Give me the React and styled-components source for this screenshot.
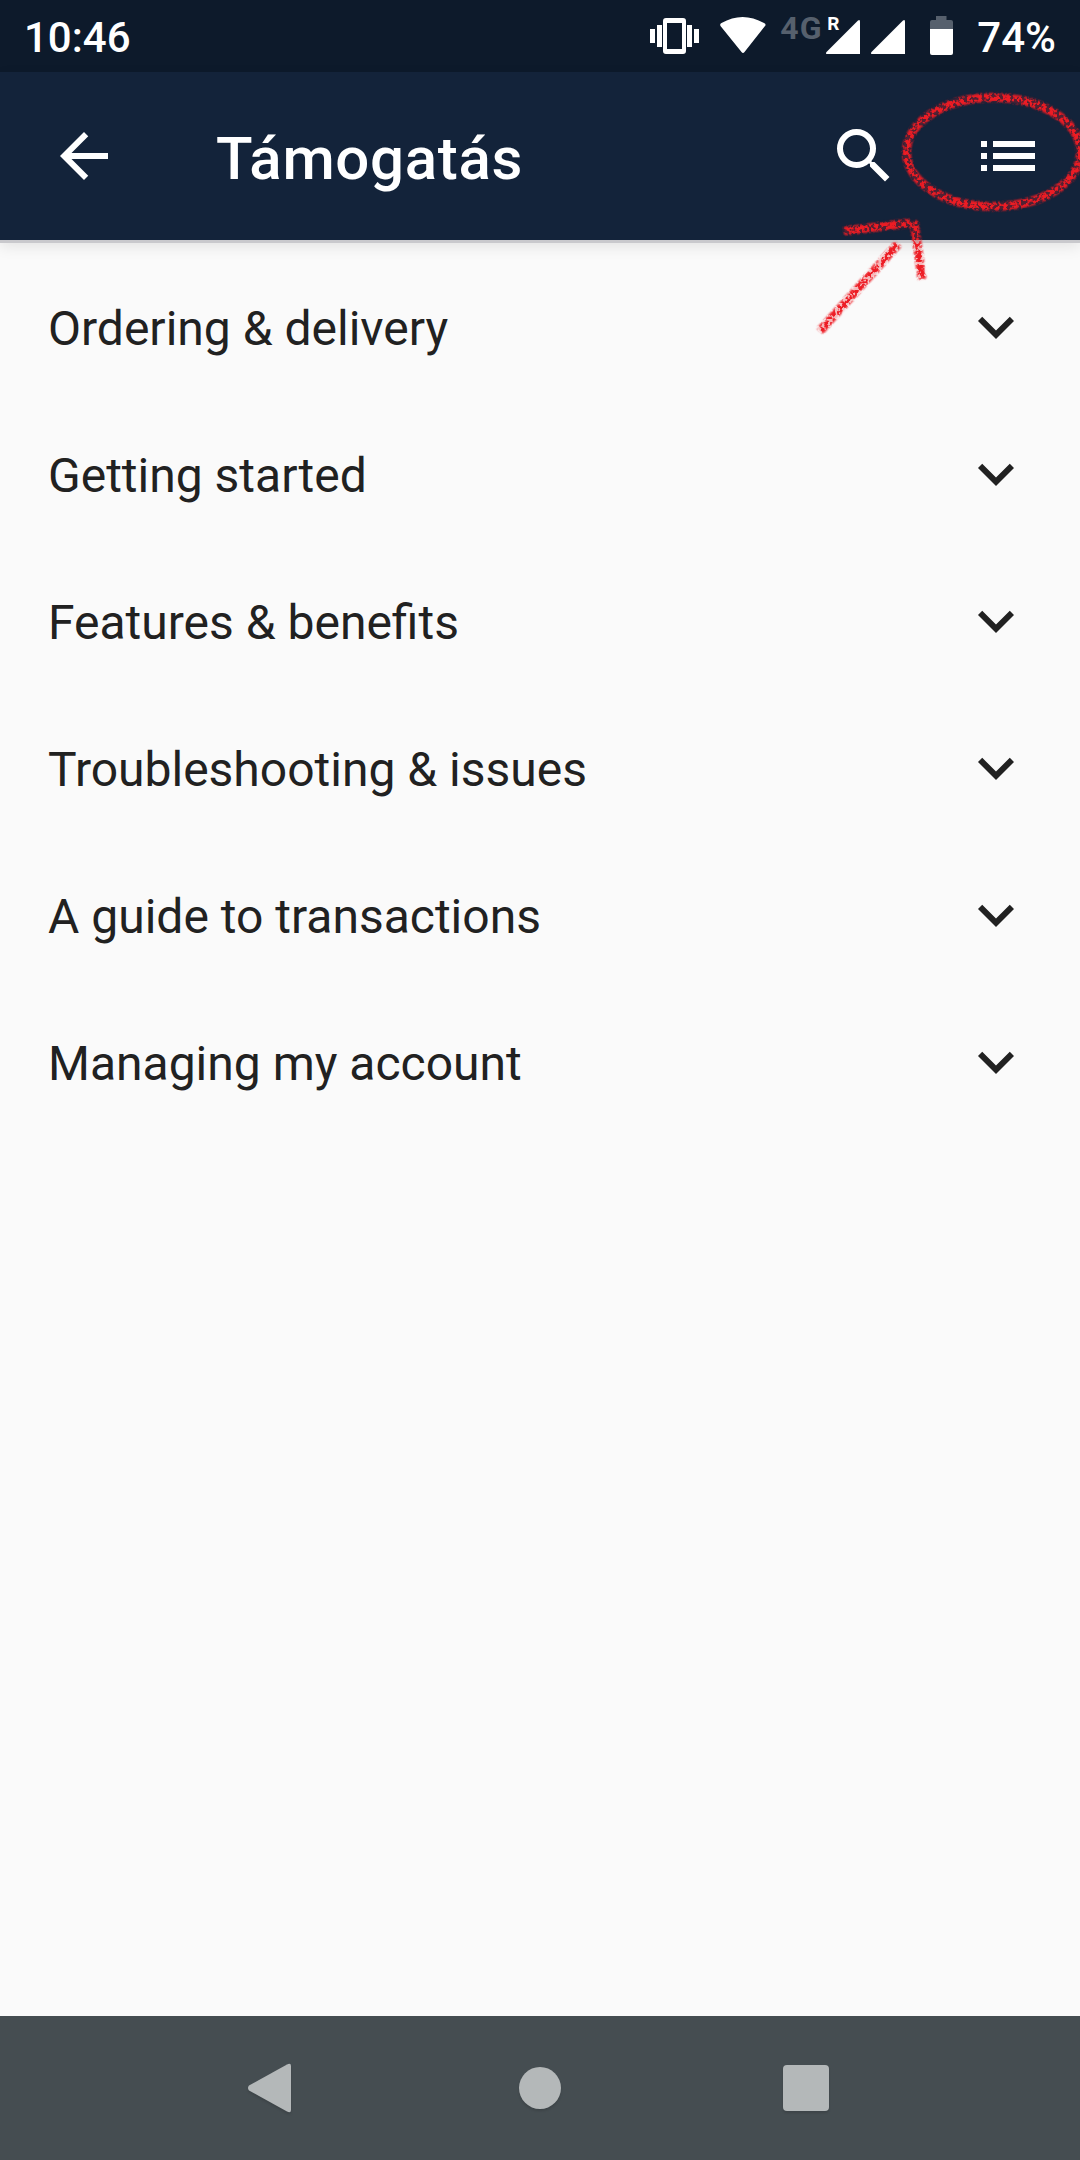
import styled, { createGlobalStyle } from "styled-components"
import { MdArrowBack, MdSearch, MdList, MdExpandMore } from "react-icons/md"

const GlobalStyle = createGlobalStyle`
  * { box-sizing: border-box; }
  body { margin: 0; background: #fafafa; overflow: hidden; }
`;

const Screen = styled.div`
  position: relative;
  display: flex;
  flex-direction: column;
  width: 1080px;
  height: 2160px;
  overflow: hidden;
  background: #fafafa;
  font-family: Roboto, "Noto Sans", sans-serif;
`;

const StatusBar = styled.div`
  display: flex;
  align-items: center;
  justify-content: space-between;
  height: 72px;
  padding: 0 24px 0 24px;
  background: #0d1a2b;
  color: #fff;
  flex-shrink: 0;
`;

const StatusText = styled.span`
  font-size: 42px;
  font-weight: 500;
  line-height: 72px;
  padding-top: 4px;
`;

const StatusIcons = styled.div`
  display: flex;
  align-items: center;
  height: 72px;
`;

const StatusIcon = styled.svg`
  display: block;
  height: 72px;
  width: ${props => props.$width}px;
  margin-right: ${props => props.$gap}px;
  fill: #fff;
`;

const Network = styled.div`
  position: relative;
  display: flex;
  height: 72px;
`;

const NetworkType = styled.span`
  width: 46px;
  padding-top: 9px;
  font-size: 32px;
  line-height: 38px;
  font-weight: 700;
  letter-spacing: 1px;
  color: #56606d;
`;

const Roaming = styled.span`
  position: absolute;
  left: 47px;
  top: 13px;
  font-size: 19px;
  line-height: 22px;
  font-weight: 700;
`;

const AppBar = styled.header`
  display: flex;
  align-items: center;
  height: 168px;
  padding: 0 36px 0 48px;
  background: #13233a;
  color: #fff;
  flex-shrink: 0;
  box-shadow: 0 3px 0 #c9c9cd, 0 6px 14px rgba(0, 0, 0, 0.1);

  svg { width: 72px; height: 72px; }
`;

const Title = styled.h1`
  flex: 1;
  margin: 0 0 0 96px;
  padding-top: 5px;
  font-size: 60px;
  line-height: 70px;
  font-weight: 500;
  letter-spacing: 0.7px;
`;

const Actions = styled.div`
  display: flex;
  gap: 72px;
`;

const TopicList = styled.ul`
  flex: 1;
  margin: 0;
  padding: 14px 0 0;
  list-style: none;
`;

const Topic = styled.li`
  display: flex;
  align-items: center;
  justify-content: space-between;
  height: 147px;
  padding: 0 48px;
  font-size: 48px;
  color: #212121;

  svg { width: 72px; height: 72px; margin-bottom: 1px; }
`;

const TopicName = styled.span`
  padding-top: 2px;
`;

const NavBar = styled.nav`
  display: flex;
  align-items: center;
  justify-content: center;
  gap: 194px;
  height: 144px;
  background: #454d51;
  flex-shrink: 0;
`;

const NavIcon = styled.svg`
  width: 72px;
  height: 72px;
  fill: #b4b8b9;
  overflow: visible;
  filter: drop-shadow(0 2px 1px rgba(0, 0, 0, 0.12));
`;

const Marker = styled.svg`
  position: absolute;
  left: 800px;
  top: 80px;
  width: 280px;
  height: 270px;
  fill: none;
  stroke: #ed1c24;
`;

const topics = [
  "Ordering & delivery",
  "Getting started",
  "Features & benefits",
  "Troubleshooting & issues",
  "A guide to transactions",
  "Managing my account",
];

const Signal = ({gap}) => (
  <StatusIcon viewBox="0 0 34 72" $width={34} $gap={gap}>
    <path d="M32 20.5q2-1.500 2 1V54H1.500q-2.500 0-1-2z"/>
  </StatusIcon>
)

const Scribble = () => (
  <>
    <ellipse cx="193.500" cy="72" rx="87" ry="54.500"/>
    <path d="M20 251L98 164M44 151L110 143M114 141L122 199"/>
  </>
)

const App = () => {
  return (
    <Screen>
      <GlobalStyle/>
      <StatusBar>
        <StatusText>10:46</StatusText>
        <StatusIcons>
          <StatusIcon viewBox="0 0 50 72" $width={50} $gap={20}>
            <path d="M0 29h5v14H0zM7 25h5v22H7zM37 25h5v22h-5zM44 29h5v14h-5z"/>
            <path fillRule="evenodd" d="M16 18h17q3 0 3 3v30q0 3-3 3H16q-3 0-3-3V21q0-3 3-3zm1 5v26h15V23z"/>
          </StatusIcon>
          <StatusIcon viewBox="0 0 46 72" $width={46} $gap={14}>
            <path d="M.5 26Q-.5 24 1.500 23Q22.500 11 44 23Q46.500 24 45 26L24.500 52Q23 54 21.500 52z"/>
          </StatusIcon>
          <Network>
            <NetworkType>4G</NetworkType>
            <Roaming>R</Roaming>
            <Signal gap={11}/>
          </Network>
          <Signal gap={25}/>
          <StatusIcon viewBox="0 0 23 72" $width={23} $gap={24}>
            <path fill="#56606d" d="M6 16h10.500v4H21q2 0 2 2v7H0v-7q0-2 2-2h4z"/>
            <path d="M0 29h23v24q0 2-2 2H2q-2 0-2-2z"/>
          </StatusIcon>
          <StatusText>74%</StatusText>
        </StatusIcons>
      </StatusBar>
      <AppBar>
        <MdArrowBack/>
        <Title>Támogatás</Title>
        <Actions>
          <MdSearch/>
          <MdList/>
        </Actions>
      </AppBar>
      <TopicList>
        {topics.map(topic => (
          <Topic key={topic}>
            <TopicName>{topic}</TopicName>
            <MdExpandMore/>
          </Topic>
        ))}
      </TopicList>
      <NavBar>
        <NavIcon viewBox="0 0 72 72">
          <path d="M11 33.500L49 12.500Q53 10.500 53 14V58Q53 61.500 49 59.500L11 38.500Q9 36 11 33.500z"/>
        </NavIcon>
        <NavIcon viewBox="0 0 72 72">
          <circle cx="36" cy="36" r="21"/>
        </NavIcon>
        <NavIcon viewBox="0 0 72 72">
          <rect x="13" y="13" width="46" height="46" rx="4"/>
        </NavIcon>
      </NavBar>
      <Marker viewBox="0 0 280 270">
        <defs>
          {/* chalky crayon texture */}
          <filter id="crayon" x="-5%" y="-5%" width="110%" height="110%" colorInterpolationFilters="sRGB">
            <feTurbulence type="fractalNoise" baseFrequency="0.28" numOctaves="2" seed="4" result="noise"/>
            <feColorMatrix in="noise" type="matrix" values="0 0 0 0 0  0 0 0 0 0  0 0 0 0 0  8 0 0 0 -3.3" result="grain"/>
            <feGaussianBlur in="SourceGraphic" stdDeviation="1.2" result="soft"/>
            <feComposite in="soft" in2="grain" operator="in"/>
          </filter>
          <filter id="smudge" x="-5%" y="-5%" width="110%" height="110%">
            <feGaussianBlur stdDeviation="1.2"/>
          </filter>
        </defs>
        <g filter="url(#smudge)" strokeWidth="8" opacity="0.3">
          <Scribble/>
        </g>
        <g filter="url(#crayon)" strokeWidth="8.500">
          <Scribble/>
        </g>
      </Marker>
    </Screen>
  )
}

export default App
